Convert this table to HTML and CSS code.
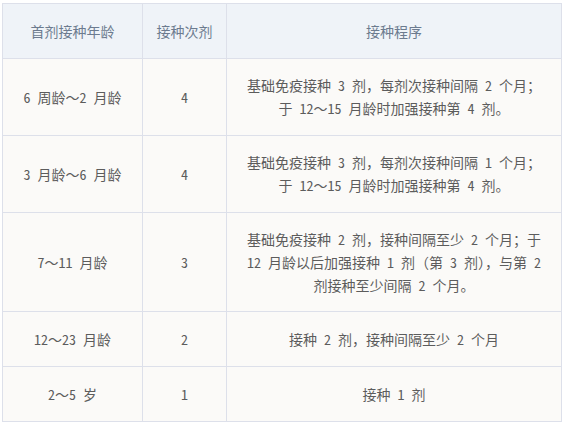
FILE: index.html
```html
<!DOCTYPE html>
<html lang="zh-CN">
<head>
<meta charset="utf-8">
<title>接种程序</title>
<link rel="stylesheet" href="styles.css">
</head>
<body>
<table class="schedule">
  <colgroup>
    <col class="c-age">
    <col class="c-dose">
    <col class="c-plan">
  </colgroup>
  <thead>
    <tr>
      <th>首剂接种年龄</th>
      <th>接种次剂</th>
      <th>接种程序</th>
    </tr>
  </thead>
  <tbody>
    <tr class="r2">
      <td>6 周龄～2 月龄</td>
      <td>4</td>
      <td>基础免疫接种 3 剂，每剂次接种间隔 2 个月；<br>于 12～15 月龄时加强接种第 4 剂。</td>
    </tr>
    <tr class="r2">
      <td>3 月龄～6 月龄</td>
      <td>4</td>
      <td>基础免疫接种 3 剂，每剂次接种间隔 1 个月；<br>于 12～15 月龄时加强接种第 4 剂。</td>
    </tr>
    <tr class="r3">
      <td>7～11 月龄</td>
      <td>3</td>
      <td>基础免疫接种 2 剂，接种间隔至少 2 个月；于<br>12 月龄以后加强接种 1 剂（第 3 剂），与第 2<br>剂接种至少间隔 2 个月。</td>
    </tr>
    <tr class="r1">
      <td>12～23 月龄</td>
      <td>2</td>
      <td>接种 2 剂，接种间隔至少 2 个月</td>
    </tr>
    <tr class="r1">
      <td>2～5 岁</td>
      <td>1</td>
      <td>接种 1 剂</td>
    </tr>
  </tbody>
</table>
</body>
</html>
```

FILE: styles.css
```css
html, body {
  margin: 0;
  padding: 0;
  background: #ffffff;
}

body {
  padding: 3px 0 0 2px;
  font-family: "Noto Sans Mono CJK SC", "Noto Sans CJK SC", "Noto Sans", sans-serif;
  font-size: 14px;
}

.schedule {
  width: 559px;
  border-collapse: collapse;
  table-layout: fixed;
  color: #5c5c5c;
}

.c-age { width: 140px; }
.c-dose { width: 84px; }
.c-plan { width: 335px; }

.schedule th,
.schedule td {
  border: 1px solid #dde0ea;
  text-align: center;
  vertical-align: middle;
  padding: 0 4px;
  line-height: 23px;
  font-weight: normal;
  white-space: nowrap;
}

.schedule th {
  background: #eff3f8;
  color: #6c7b8f;
  height: 54px;
}

.schedule td {
  background: #fbfaf8;
}

.r2 td { height: 76px; }
.r3 td { height: 98px; }
.r1 td { height: 54px; }
```
